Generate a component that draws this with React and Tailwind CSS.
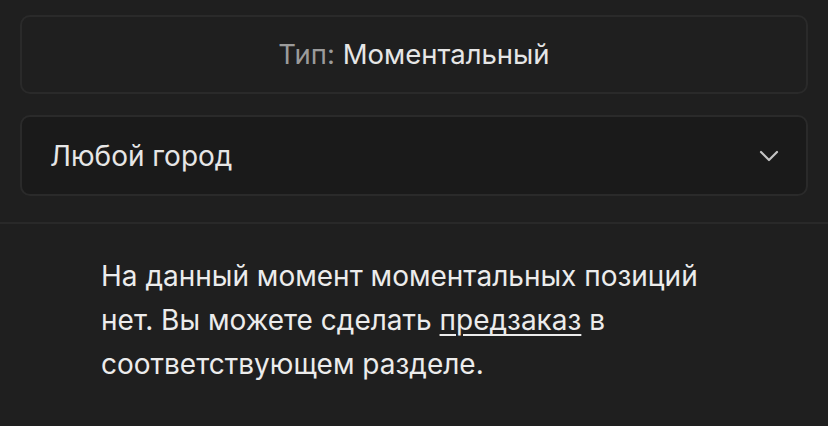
export default function App() {
  return (
    <div className="w-[828px] h-[426px] bg-[#1f1f1f] overflow-hidden" style={{ fontFamily: 'Inter, "Noto Sans", sans-serif' }}>
      <div className="px-[20px] pt-[15px] flex flex-col gap-[21px]">
        <div className="h-[79px] rounded-[10px] border-2 border-[#2a2a2a] bg-[#1f1f1f] flex items-center justify-center text-[27.5px]">
          <span className="text-[#9b9b9b]">Тип:&nbsp;</span>
          <span className="text-[#e6e6e6]">Моментальный</span>
        </div>
        <div className="h-[81px] rounded-[10px] border-2 border-[#2a2a2a] bg-[#1a1a1a] flex items-center justify-between pl-[28px] pr-[27px]">
          <span className="text-[28px] text-[#e6e6e6]">Любой город</span>
          <svg width="20" height="12" viewBox="0 0 20 12" fill="none">
            <path d="M2 2 L10 10 L18 2" stroke="#c4c4c4" strokeWidth="2.2" strokeLinecap="round" strokeLinejoin="round" />
          </svg>
        </div>
      </div>
      <div className="mt-[26px] h-[2px] bg-[#292929]" />
      <div className="pl-[101px] pr-[107px] pt-[30px]">
        <p className="text-[28px] leading-[44px] text-[#ececec]">
          На данный момент моментальных позиций нет. Вы можете сделать{' '}
          <span className="underline underline-offset-[4px] decoration-[2px]">предзаказ</span> в соответствующем разделе.
        </p>
      </div>
    </div>
  );
}
